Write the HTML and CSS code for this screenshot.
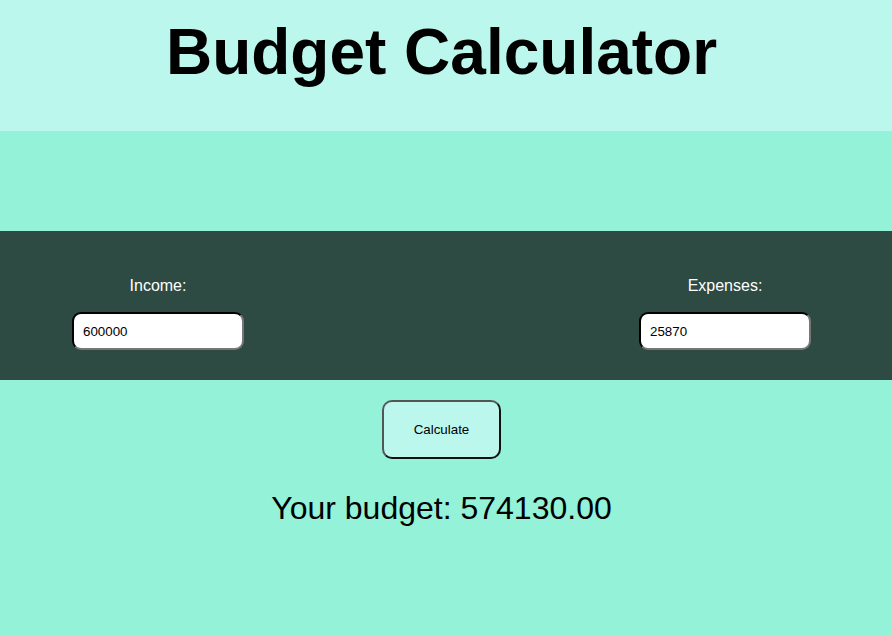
FILE: index.html
```html
<!DOCTYPE html>
<html lang="en">
<head>
<meta charset="utf-8">
<title>Budget Calculator</title>
<link rel="stylesheet" href="styles.css">
</head>
<body>
<header class="header">
  <h1 class="title">Budget Calculator</h1>
</header>
<section class="band">
  <div class="field">
    <label class="field-label" for="income">Income:</label>
    <input class="field-input" id="income" type="text" value="600000">
  </div>
  <div class="field">
    <label class="field-label" for="expenses">Expenses:</label>
    <input class="field-input" id="expenses" type="text" value="25870">
  </div>
</section>
<main class="result-area">
  <button class="calc-btn" type="button">Calculate</button>
  <p class="result">Your budget: 574130.00</p>
</main>
</body>
</html>
```
FILE: styles.css
```css
html, body {
  margin: 0;
  padding: 0;
}
body {
  background: #93f2d7;
  font-family: "Liberation Sans", Arial, sans-serif;
  color: #000;
}
.header {
  background: #bcf7ee;
  height: 131px;
  box-sizing: border-box;
  padding: 15px 9px 0 0;
  margin-bottom: 100px;
}
.title {
  margin: 0;
  font-size: 64px;
  font-weight: bold;
  text-align: center;
  line-height: 74px;
}
.band {
  background: #2d4a43;
  height: 149px;
  box-sizing: border-box;
  padding: 46px 81px 0 72px;
  display: flex;
  justify-content: space-between;
}
.field {
  width: 172px;
  display: flex;
  flex-direction: column;
  align-items: center;
}
.field-label {
  color: #fff;
  font-size: 16px;
  line-height: 18px;
  margin-bottom: 17px;
}
.field-input {
  width: 172px;
  height: 38px;
  box-sizing: border-box;
  border: 2px inset;
  border-color: #1e1e1e #767676 #767676 #1e1e1e;
  border-radius: 9px;
  background: #fff;
  padding: 0 9px;
  font-family: "Liberation Sans", Arial, sans-serif;
  font-size: 13.33px;
  color: #000;
  outline: none;
}
.result-area {
  display: flex;
  flex-direction: column;
  align-items: center;
  padding: 20px 9px 0 0;
}
.calc-btn {
  width: 119px;
  height: 59px;
  box-sizing: border-box;
  background: #bcf7ee;
  border: 2px solid;
  border-color: #555 #111 #111 #555;
  border-radius: 10px;
  font-family: "Liberation Sans", Arial, sans-serif;
  font-size: 13.33px;
  color: #000;
  padding: 0;
}
.result {
  margin: 31px 0 0;
  font-size: 32px;
  line-height: 37px;
}
```
